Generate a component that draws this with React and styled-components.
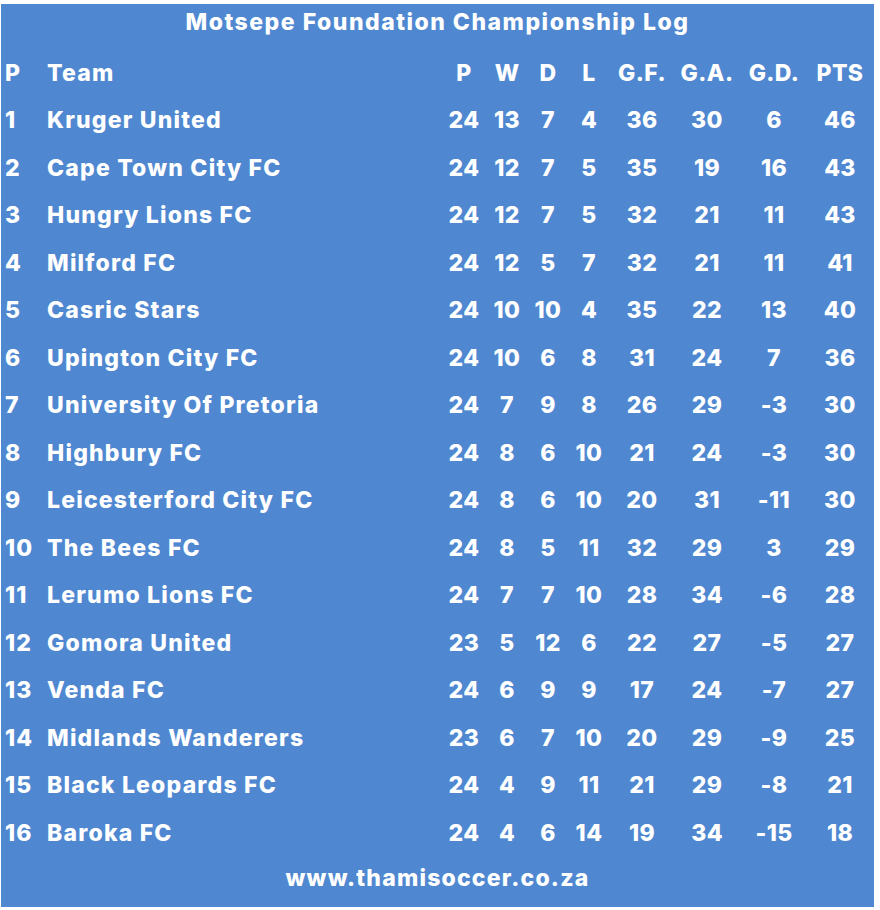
import styled, { createGlobalStyle } from "styled-components";

const teams = [
  [1, "Kruger United", 24, 13, 7, 4, 36, 30, 6, 46],
  [2, "Cape Town City FC", 24, 12, 7, 5, 35, 19, 16, 43],
  [3, "Hungry Lions FC", 24, 12, 7, 5, 32, 21, 11, 43],
  [4, "Milford FC", 24, 12, 5, 7, 32, 21, 11, 41],
  [5, "Casric Stars", 24, 10, 10, 4, 35, 22, 13, 40],
  [6, "Upington City FC", 24, 10, 6, 8, 31, 24, 7, 36],
  [7, "University Of Pretoria", 24, 7, 9, 8, 26, 29, -3, 30],
  [8, "Highbury FC", 24, 8, 6, 10, 21, 24, -3, 30],
  [9, "Leicesterford City FC", 24, 8, 6, 10, 20, 31, -11, 30],
  [10, "The Bees FC", 24, 8, 5, 11, 32, 29, 3, 29],
  [11, "Lerumo Lions FC", 24, 7, 7, 10, 28, 34, -6, 28],
  [12, "Gomora United", 23, 5, 12, 6, 22, 27, -5, 27],
  [13, "Venda FC", 24, 6, 9, 9, 17, 24, -7, 27],
  [14, "Midlands Wanderers", 23, 6, 7, 10, 20, 29, -9, 25],
  [15, "Black Leopards FC", 24, 4, 9, 11, 21, 29, -8, 21],
  [16, "Baroka FC", 24, 4, 6, 14, 19, 34, -15, 18],
];

const headers = ["P", "W", "D", "L", "G.F.", "G.A.", "G.D.", "PTS"];

export default function App() {
  return (
    <>
      <GlobalStyle />
      <Panel>
        <Title>Motsepe Foundation Championship Log</Title>
        <Table>
          <Row>
            <Cell>P</Cell>
            <Cell>Team</Cell>
            {headers.map((h, i) => <Num key={i}>{h}</Num>)}
          </Row>
          {teams.map(t => (
            <Row key={t[0]}>
              <Cell>{t[0]}</Cell>
              <Cell>{t[1]}</Cell>
              {t.slice(2).map((v, i) => <Num key={i}>{v}</Num>)}
            </Row>
          ))}
        </Table>
        <Footer>www.thamisoccer.co.za</Footer>
      </Panel>
    </>
  );
}

const GlobalStyle = createGlobalStyle`
  body {
    margin: 0;
    background: #ffffff;
  }
`;

const Panel = styled.div`
  margin: 4px 0 0 1px;
  width: 873px;
  height: 903px;
  box-sizing: border-box;
  background-color: #4f88d1;
  color: #ffffff;
  font-family: Inter, "Liberation Sans", sans-serif;
  font-weight: 800;
  font-size: 23px;
  letter-spacing: 1.2px;
  padding: 0 0 8px 4px;
  display: flex;
  flex-direction: column;
`;

const Title = styled.div`
  height: 37px;
  line-height: 37px;
  text-align: center;
  margin: 0 0 8px -4px;
  letter-spacing: 1.5px;
`;

const Table = styled.div`
  display: flex;
  flex-direction: column;
`;

const Row = styled.div`
  display: grid;
  grid-template-columns: 42px 1fr 40px 46px 36px 46px 60px 70px 64px 68px;
  height: 47.5px;
  align-items: center;
`;

const Cell = styled.div`
  white-space: nowrap;
`;

const Num = styled.div`
  text-align: center;
  white-space: nowrap;
  letter-spacing: 0.4px;
`;

const Footer = styled.div`
  height: 42px;
  line-height: 42px;
  text-align: center;
  margin-left: -4px;
`;
